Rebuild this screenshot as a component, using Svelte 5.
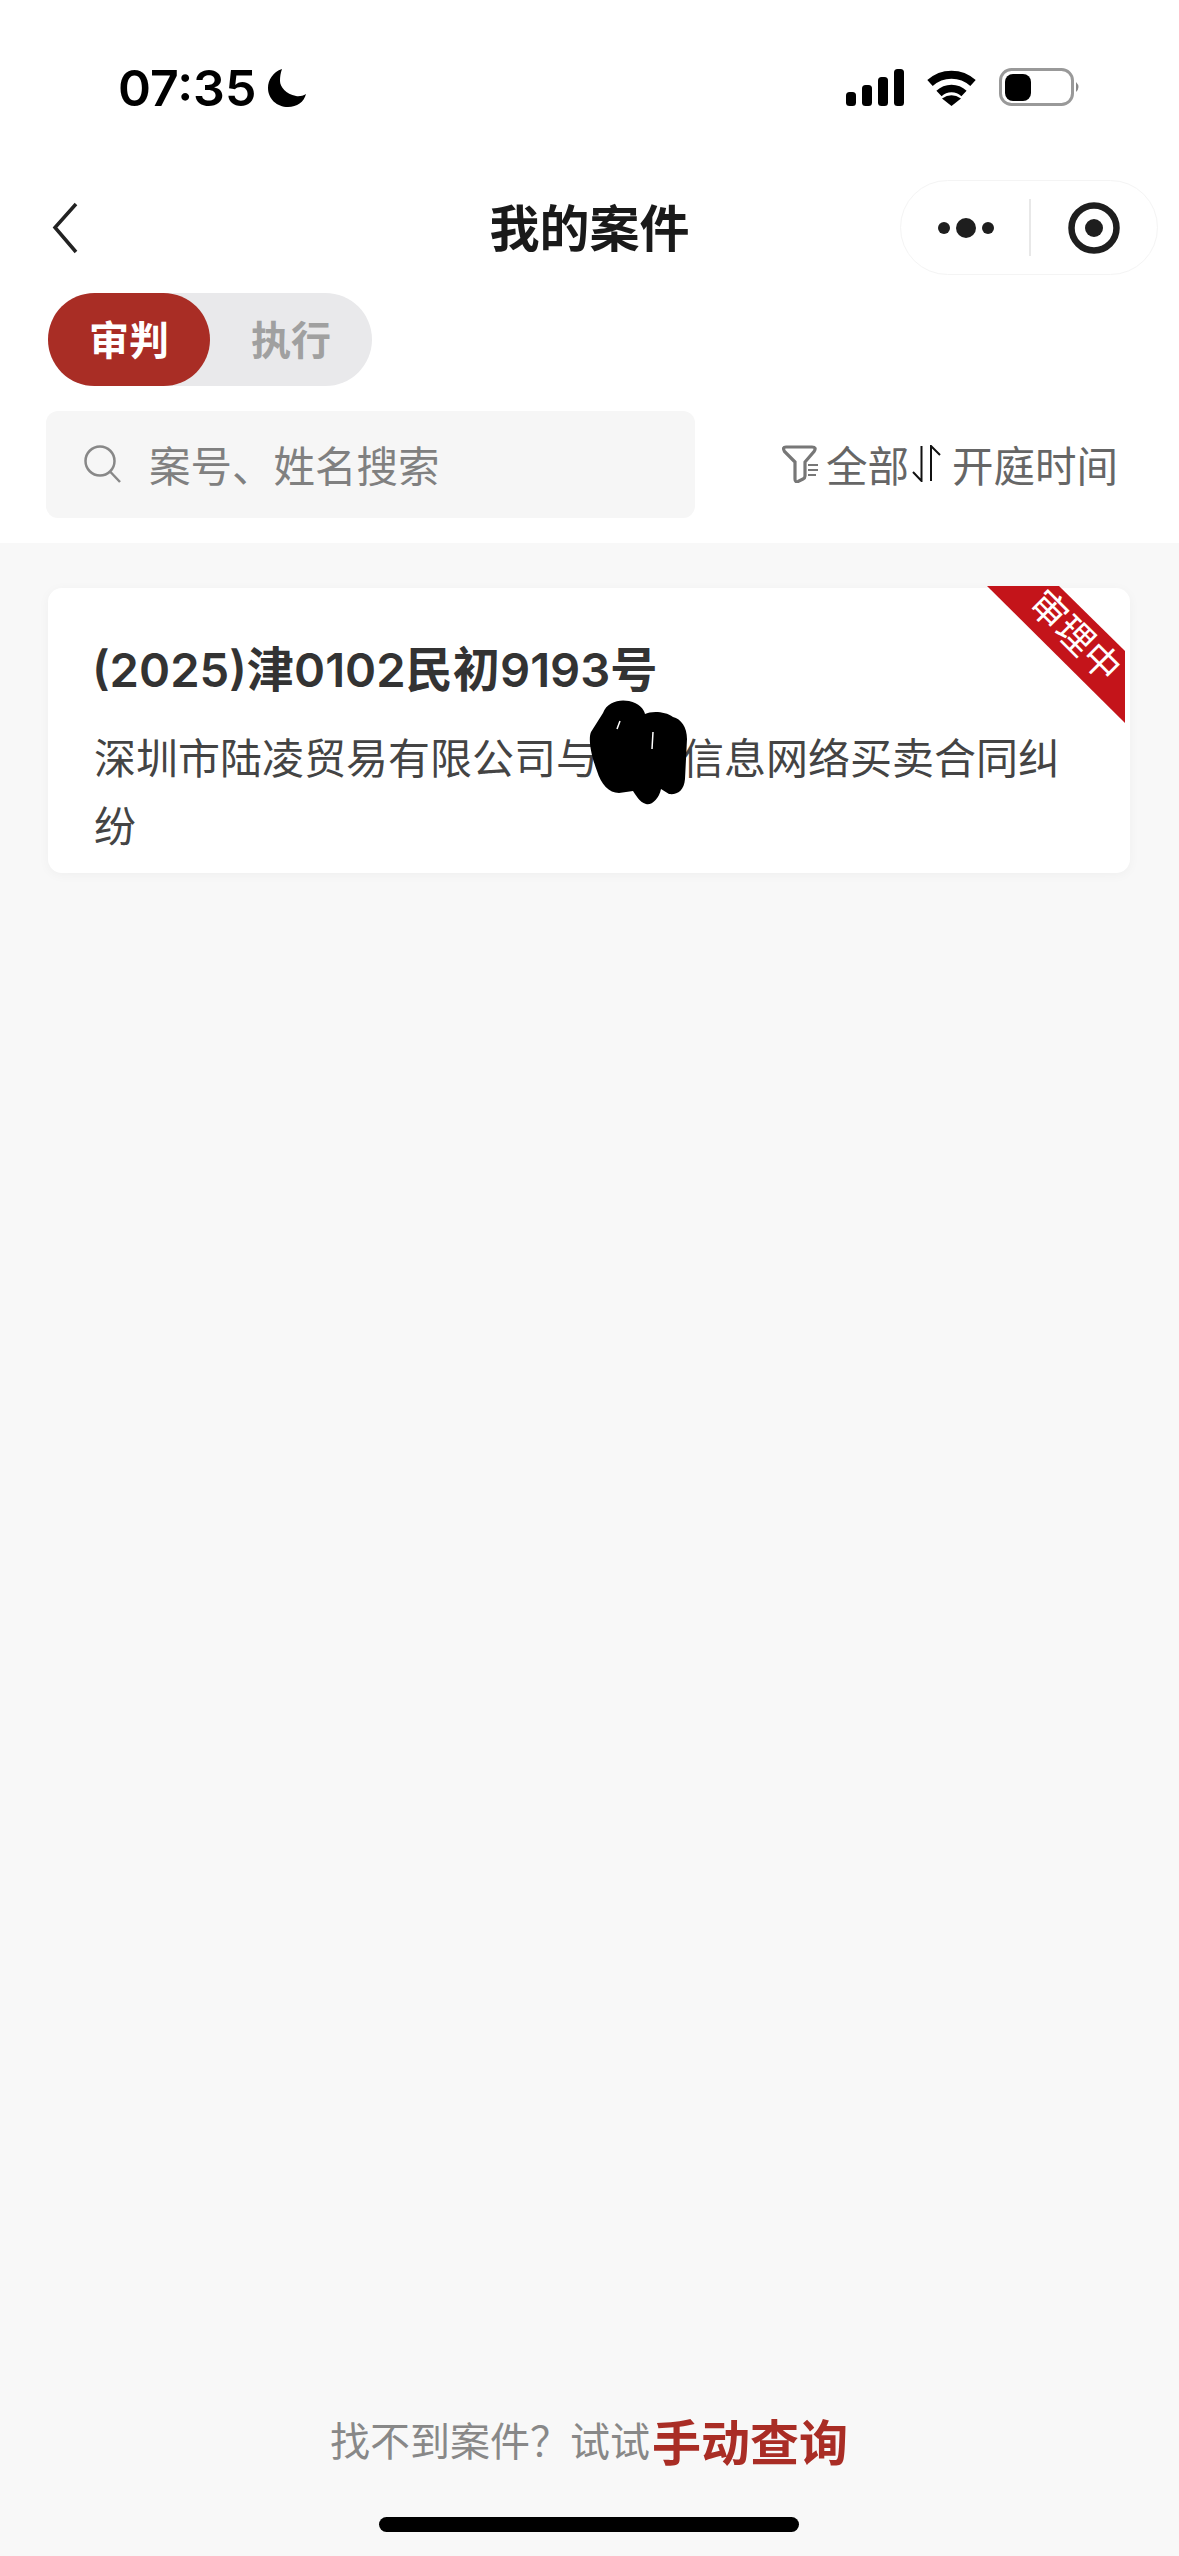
<script>
  let tab = $state('trial');
</script>

<div class="page">
  <header class="top">
    <div class="status">
      <div class="clock">
        <span class="time">07:35</span>
        <svg class="moon" viewBox="0 0 38 38" width="38" height="38">
          <path d="M14 0C5 3 0 11 0 19C0 30 9 38 20 38C29 38 36 33 38 25C35 27 31 27.500 28 27C18 25 12 18 12 12C12 8 12.500 4 14 0Z" fill="#000" />
        </svg>
      </div>
      <div class="indicators">
        <svg viewBox="0 0 58 37" width="58" height="37">
          <rect x="0" y="23" width="10" height="14" rx="3.500" />
          <rect x="16" y="16" width="10" height="21" rx="3.500" />
          <rect x="32" y="8" width="10" height="29" rx="3.500" />
          <rect x="48" y="0" width="10" height="37" rx="3.500" />
        </svg>
        <svg viewBox="0 0 49 37" width="49" height="37">
          <path d="M3 14A32 32 0 0 1 46 14" fill="none" stroke="#000" stroke-width="8" />
          <path d="M12 24.500A18 18 0 0 1 37 24.500" fill="none" stroke="#000" stroke-width="7.500" />
          <path d="M24.500 37L15 29.500Q24.500 23 34 29.500Z" />
        </svg>
        <svg viewBox="0 0 82 38" width="82" height="38">
          <rect x="1.500" y="1.500" width="72" height="35" rx="11" fill="none" stroke="#999" stroke-width="3" />
          <rect x="6" y="6" width="26" height="27" rx="8" />
          <path d="M77 14Q82 19 77 24Z" fill="#888" />
        </svg>
      </div>
    </div>

    <nav class="nav">
      <svg class="back" viewBox="0 0 26 52" width="26" height="52">
        <path d="M24 2L3 25.500L24 50" fill="none" stroke="#222" stroke-width="3.500" />
      </svg>
      <h1>我的案件</h1>
      <div class="capsule">
        <svg class="more" viewBox="0 0 56 20" width="56" height="20">
          <circle cx="6" cy="10" r="6" />
          <circle cx="28" cy="10" r="10" />
          <circle cx="50" cy="10" r="6" />
        </svg>
        <span class="divider"></span>
        <svg class="target" viewBox="0 0 52 52" width="52" height="52">
          <circle cx="26" cy="26" r="22.500" fill="none" stroke="#1e1e1e" stroke-width="6.500" />
          <circle cx="26" cy="26" r="9" />
        </svg>
      </div>
    </nav>

    <div class="tabs">
      <button class:active={tab === 'trial'} onclick={() => tab = 'trial'}>审判</button>
      <button class:active={tab === 'exec'} onclick={() => tab = 'exec'}>执行</button>
    </div>

    <div class="tools">
      <div class="search">
        <svg viewBox="0 0 38 38" width="38" height="38">
          <circle cx="16" cy="16" r="14.500" fill="none" stroke="#888" stroke-width="2.500" />
          <path d="M26.500 27L36 37" fill="none" stroke="#888" stroke-width="2.500" />
        </svg>
        <span>案号、姓名搜索</span>
      </div>
      <div class="filters">
        <svg class="funnel" viewBox="0 0 37 38" width="37" height="38">
          <path d="M4 2H30Q35 2 32 6.500L23 17V31Q23 33 21 34L16 36.500Q13 37.500 13 34V17L2.500 6.500Q0 2 4 2Z" fill="none" stroke="#777" stroke-width="3.200" />
          <path d="M26 20H36M26 25H36M26 30H34" stroke="#777" stroke-width="2.200" />
        </svg>
        <span class="all">全部</span>
        <svg class="sort" viewBox="0 0 29 37" width="29" height="37">
          <path d="M9.500 1V36L1 27M19 36V1L28 10" fill="none" stroke="#111" stroke-width="2" />
        </svg>
        <span class="order">开庭时间</span>
      </div>
    </div>
  </header>

  <main>
    <article class="card">
      <div class="ribbon"><span>审理中</span></div>
      <h2>(2025)津0102民初9193号</h2>
      <p>深圳市陆凌贸易有限公司与<span class="redacted"><svg viewBox="0 0 98 106" width="98" height="106">
        <path d="M14 14C18 3 30 0 40 2C50 4 55 10 56 15C62 12 76 12 84 18C92 20 98 28 98 40L96 80C95 92 88 96 80 95L72 90C70 100 62 107 57 105C50 103 47 96 44 92L30 94C20 94 12 85 8 72C2 56 -1 40 2 33Z" fill="#000" />
        <path d="M64 33L63 50M31 22L28 30" stroke="#fff" stroke-width="1.500" fill="none" />
      </svg></span>信息网络买卖合同纠纷</p>
    </article>

    <div class="hint">
      <span>找不到案件？试试</span><a href="#manual">手动查询</a>
    </div>
    <div class="home"></div>
  </main>
</div>

<style>
  :global(body) {
    background: #f8f8f8;
  }

  .page {
    width: 1179px;
    height: 2556px;
    display: flex;
    flex-direction: column;
    overflow: hidden;
    font-family: Inter, "Noto Sans CJK SC", sans-serif;
  }

  .top {
    background: #fff;
    height: 543px;
    flex: none;
  }

  .status {
    height: 180px;
    box-sizing: border-box;
    padding: 68px 98px 0 118px;
    display: flex;
    justify-content: space-between;
    align-items: flex-start;
  }

  .clock {
    display: flex;
    align-items: center;
    gap: 12px;
    height: 40px;
  }

  .time {
    font-size: 50px;
    font-weight: 600;
    line-height: 40px;
    color: #000;
  }

  .indicators {
    display: flex;
    align-items: center;
    gap: 23px;
    height: 38px;
  }

  .nav {
    height: 95px;
    display: grid;
    grid-template-columns: minmax(0, 1fr) auto minmax(0, 1fr);
    align-items: center;
    padding: 0 21px;
  }

  .back {
    display: block;
    margin-left: 31px;
  }

  h1 {
    margin: 2px 0 0;
    font-size: 50px;
    line-height: 60px;
    font-weight: 700;
    color: #1a1a1a;
  }

  .capsule {
    justify-self: end;
    flex: none;
    width: 258px;
    height: 95px;
    box-sizing: border-box;
    border: 1px solid #f4f4f4;
    border-radius: 48px;
    display: flex;
    align-items: center;
    padding-left: 37px;
  }

  .more {
    fill: #1e1e1e;
    flex: none;
  }

  .divider {
    width: 2px;
    height: 57px;
    background: #e8e8e8;
    margin-left: 35px;
    flex: none;
  }

  .target {
    fill: #1e1e1e;
    margin-left: 37px;
    flex: none;
  }

  .tabs {
    display: flex;
    width: 324px;
    height: 93px;
    margin: 18px 0 0 48px;
    background: #e9e9eb;
    border-radius: 47px;
  }

  .tabs button {
    flex: 1;
    border: none;
    background: none;
    padding: 0 0 3px;
    font-family: inherit;
    font-size: 40px;
    font-weight: 700;
    color: #a0a0a0;
    border-radius: 47px;
  }

  .tabs button.active {
    background: #a92d25;
    color: #fff;
  }

  .tools {
    display: flex;
    align-items: center;
    margin: 25px 0 0 46px;
  }

  .search {
    width: 649px;
    height: 107px;
    box-sizing: border-box;
    padding: 0 0 2px 38px;
    display: flex;
    align-items: center;
    gap: 27px;
    background: #f6f6f6;
    border-radius: 12px;
    font-size: 41.500px;
    color: #808080;
  }

  .filters {
    display: flex;
    align-items: center;
    margin-left: 87px;
    padding-bottom: 2px;
    font-size: 41.500px;
    color: #666;
  }

  .all {
    margin-left: 7px;
  }

  .sort {
    margin: 0 11px 0 3px;
  }

  main {
    flex: 1;
    display: flex;
    flex-direction: column;
    background: #f8f8f8;
    padding: 45px 49px 24px 48px;
  }

  .card {
    position: relative;
    height: 285px;
    box-sizing: border-box;
    padding: 54px 46px 0;
    background: #fff;
    border-radius: 14px;
    box-shadow: 0 2px 12px rgba(0, 0, 0, 0.04);
  }

  .ribbon {
    position: absolute;
    top: -2px;
    right: 5px;
    width: 138px;
    height: 137px;
    background: #c4141a;
    clip-path: polygon(0 0, 72px 0, 138px 65px, 138px 137px);
  }

  .ribbon span {
    position: absolute;
    left: 88px;
    top: 50px;
    transform: translate(-50%, -50%) rotate(45deg);
    white-space: nowrap;
    font-size: 37px;
    line-height: 40px;
    color: #fff;
  }

  h2 {
    margin: 0 0 0 -2px;
    font-size: 47.200px;
    line-height: 56px;
    font-weight: 600;
    color: #333;
  }

  p {
    margin: 27px 0 0;
    font-size: 42px;
    line-height: 68px;
    color: #444;
  }

  /* name scribbled out in the source: two characters of blank with the blot on top */
  .redacted {
    position: relative;
    display: inline-block;
    width: 2em;
  }

  .redacted svg {
    position: absolute;
    left: -9px;
    top: -75px;
  }

  .hint {
    margin-top: auto;
    display: flex;
    justify-content: center;
    align-items: center;
    height: 60px;
    padding-top: 2px;
    font-size: 40px;
    color: #888;
  }

  .hint a {
    margin-left: 2px;
    font-size: 49px;
    font-weight: 700;
    color: #a92d25;
    text-decoration: none;
  }

  .home {
    width: 420px;
    height: 15px;
    margin: 48px auto 0;
    background: #000;
    border-radius: 8px;
  }
</style>
